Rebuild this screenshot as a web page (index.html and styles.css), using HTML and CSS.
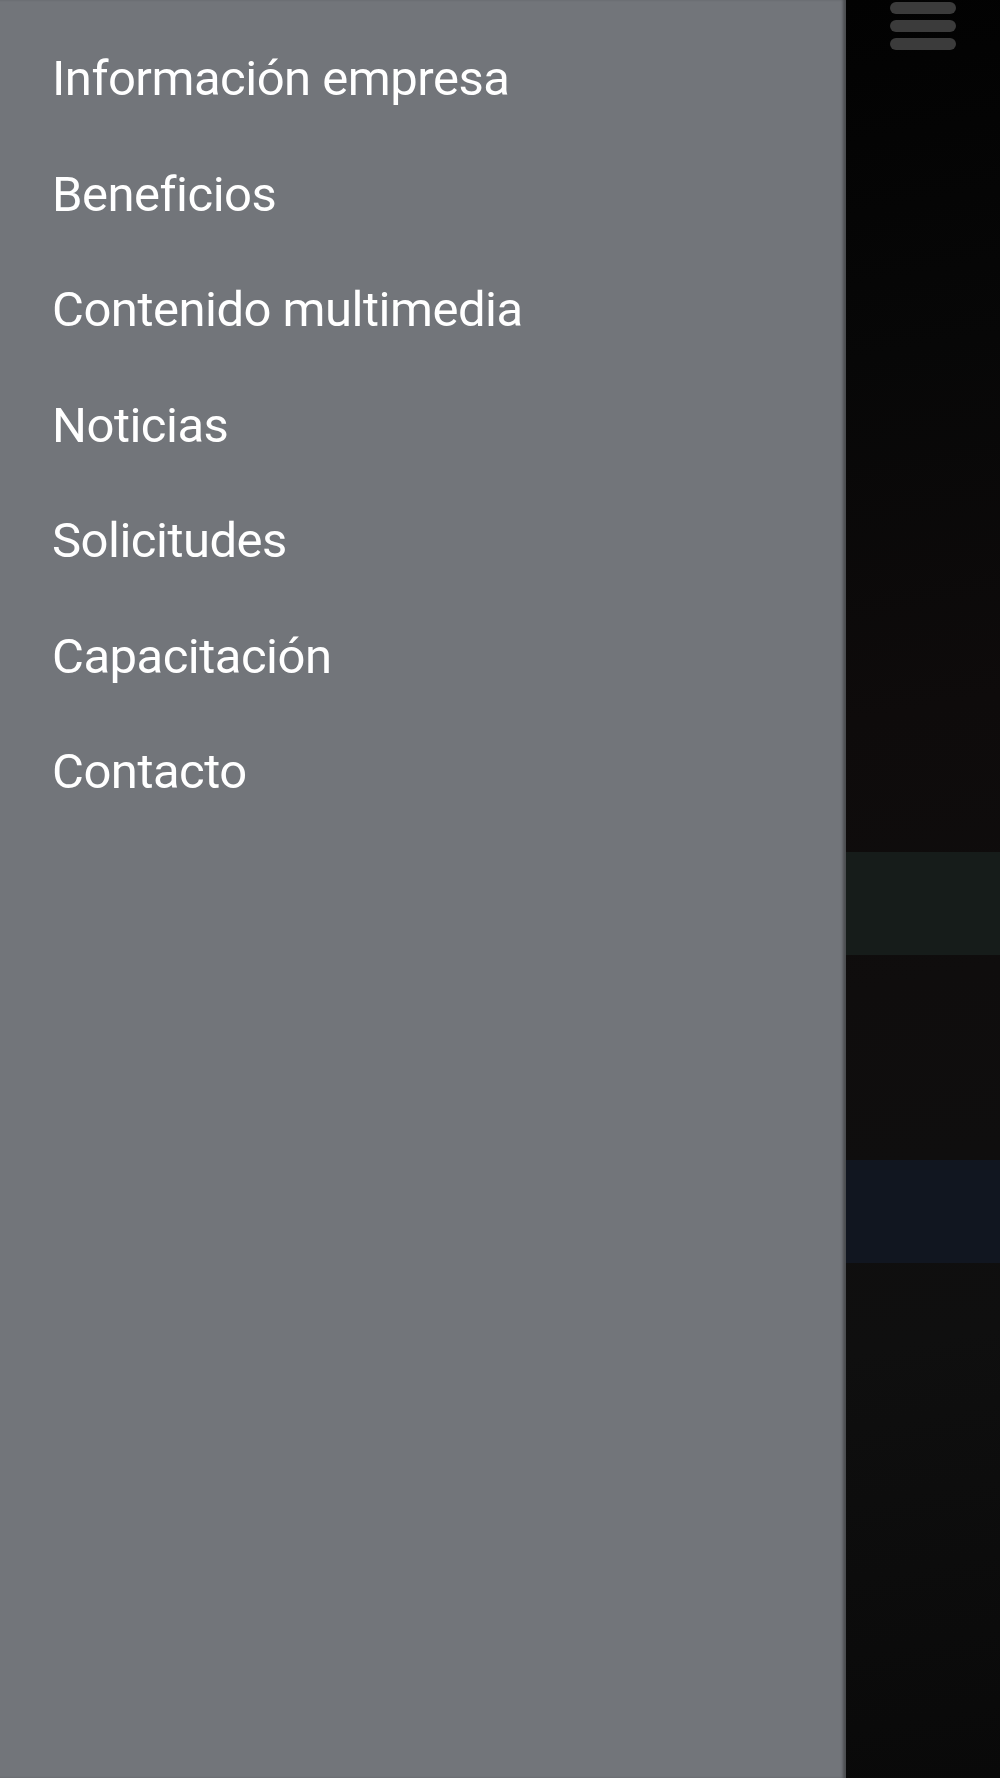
FILE: index.html
```html
<!DOCTYPE html>
<html lang="es">
<head>
  <meta charset="UTF-8" />
  <meta name="viewport" content="width=device-width, initial-scale=1.0"/>
  <title>Menú</title>
  <link rel="stylesheet" href="styles.css">
</head>
<body>
<div class="screen">
  <nav class="drawer">
    <a class="menu-item" href="#">Información empresa</a>
    <a class="menu-item" href="#">Beneficios</a>
    <a class="menu-item" href="#">Contenido multimedia</a>
    <a class="menu-item" href="#">Noticias</a>
    <a class="menu-item" href="#">Solicitudes</a>
    <a class="menu-item" href="#">Capacitación</a>
    <a class="menu-item" href="#">Contacto</a>
  </nav>

  <div class="content">
    <div class="hamburger">
      <span></span>
      <span></span>
      <span></span>
    </div>
    <div class="band band-green"></div>
    <div class="band band-blue"></div>
  </div>
</div>
</body>
</html>
```

FILE: styles.css
```css
html, body {
  margin: 0;
  height: 100%;
}
body {
  font-family: Roboto, "Noto Sans", sans-serif;
  background-color: #0a0a0a;
}
.screen {
  display: flex;
  height: 1778px;
  overflow: hidden;
}
.drawer {
  width: 846px;
  flex-shrink: 0;
  background-color: #72757a;
  box-shadow: inset -4px 0 3px -1px rgba(0,0,0,0.35);
  display: flex;
  flex-direction: column;
  padding: 21px 0 0 52px;
  box-sizing: border-box;
}
.menu-item {
  display: block;
  color: #fff;
  text-decoration: none;
  font-size: 49px;
  letter-spacing: -0.5px;
  line-height: 115.5px;
  height: 115.5px;
}
.content {
  flex: 1;
  display: flex;
  flex-direction: column;
  background: linear-gradient(170deg, #020202 0%, #070707 20%, #0e0b0b 40%, #0f0d0d 55%, #0f0f0f 75%, #090909 100%);
}
.hamburger {
  display: flex;
  flex-direction: column;
  gap: 6px;
  width: 66px;
  margin: 2px 0 0 44px;
}
.hamburger span {
  display: block;
  height: 12px;
  border-radius: 6px;
  background-color: #3b3b3b;
}
.band {
  height: 103px;
}
.band-green {
  margin-top: 802px;
  background-color: #161c1a;
}
.band-blue {
  margin-top: 205px;
  background-color: #111620;
}
```
